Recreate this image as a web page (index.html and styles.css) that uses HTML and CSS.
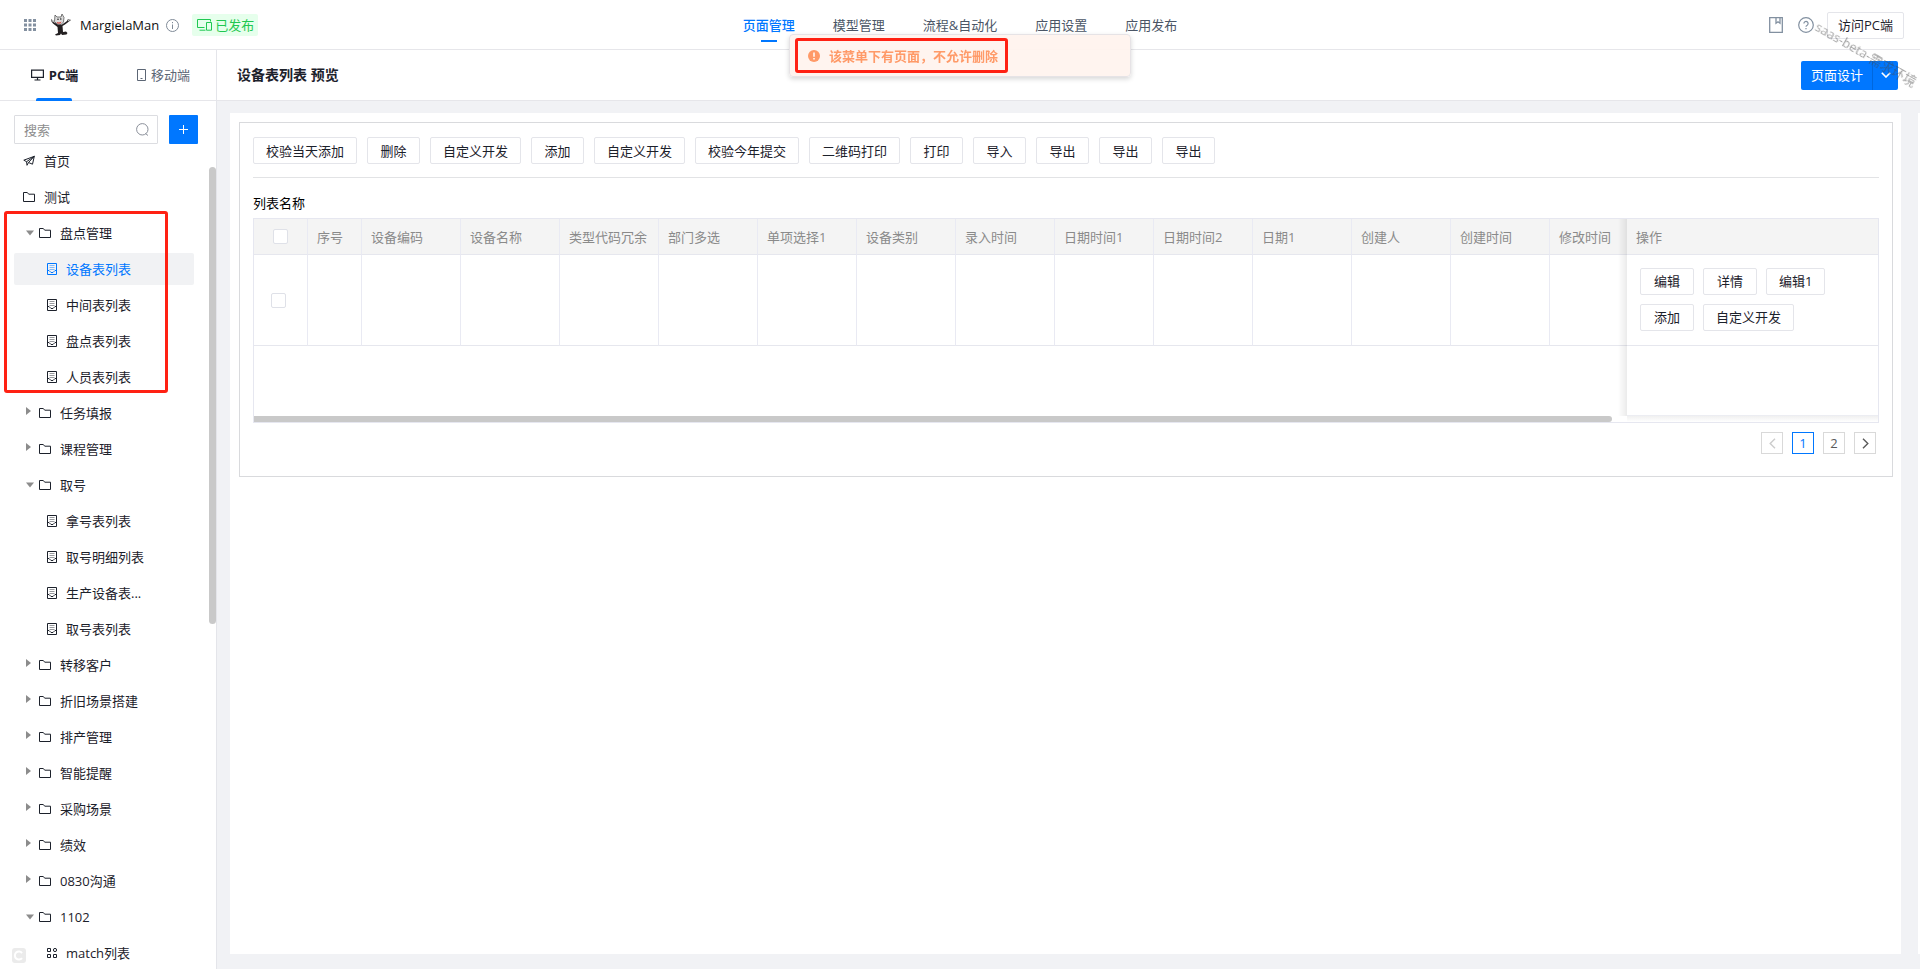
FILE: index.html
```html
<!DOCTYPE html>
<html lang="zh-CN">
<head>
<meta charset="utf-8">
<meta name="viewport" content="width=device-width, initial-scale=1">
<title>设备表列表 预览</title>
<link rel="stylesheet" href="styles.css">
</head>
<body>
<svg class="sprite" aria-hidden="true">
  <symbol id="i-folder" viewBox="0 0 12 12"><path d="M.5 10.5v-9h3.8l1.4 1.700h5.800v7.300z" fill="none" stroke="currentColor"/></symbol>
  <symbol id="i-form" viewBox="0 0 10 12"><path d="M.5.5h9v11h-9z" fill="none" stroke="currentColor"/><path d="M2.500 2.500h5M2.500 4.500h5M2.500 6.500h5" stroke="currentColor" opacity=".45"/><path d="M.5 7.500h1.500L4 9.500h2l2-2h1.500" fill="none" stroke="currentColor"/></symbol>
  <symbol id="i-down" viewBox="0 0 8 8"><path d="M0 1.500h8L4 6.500z" fill="currentColor"/></symbol>
  <symbol id="i-right" viewBox="0 0 8 8"><path d="M0 0v8l5-4z" fill="currentColor"/></symbol>
</svg>

<header class="topbar">
  <div class="brand">
    <button class="icon-btn apps" type="button" aria-label="应用">
      <svg width="12" height="12" viewBox="0 0 12 12" fill="#8390a0"><path d="M0 0h3v3H0zM4.500 0h3v3h-3zM9 0h3v3H9zM0 4.500h3v3H0zM4.500 4.500h3v3h-3zM9 4.500h3v3H9zM0 9h3v3H0zM4.500 9h3v3h-3zM9 9h3v3H9z"/></svg>
    </button>
    <svg class="logo" width="20" height="22" viewBox="0 0 20 22" aria-hidden="true">
      <path d="M0 5l2 1.500.5 1.500L6 10l1 .5h4l3-2 2-1.500 1-2L18 5.500l2 .5-2 1.500-4 3-2.500 1.500.5 6 3-.5 1.500 1.500-1 1.500-4.500.5-1-1.500-1 1.500-4 .500L4 20.500l3-1.500L6.500 13 2 9.500.5 7.500z" fill="#231f20"/>
      <path d="M4 1l2 2h4l1-3 2 3.500-.5 4.500-2.500 2.500-4-.5-2.500-2.500z" fill="#dcdcdc" stroke="#444" stroke-width=".7"/>
      <path d="M5.500 8q3 1 5-.5l-1 2H6.500z" fill="#d8403a"/>
      <circle cx="7" cy="5.300" r=".8" fill="#222"/><circle cx="9.800" cy="5" r=".8" fill="#222"/>
      <path d="M0 5.500l3 1-1 2zM20 5.500l-3 0 0 2z" fill="#bbb"/>
    </svg>
    <span class="brand-name">MargielaMan</span>
    <svg class="info" width="13" height="13" viewBox="0 0 13 13" fill="none" stroke="#7f8a97"><circle cx="6.500" cy="6.500" r="6"/><path d="M6.500 5.500v4.500M6.500 3v1.200"/></svg>
    <span class="badge">
      <svg width="15" height="12" viewBox="0 0 15 12" fill="none" stroke="currentColor"><path d="M7.500 8.500h-7v-8h13v2M2.500 11.200h6M9.500 3.500h5v7.700h-5z"/></svg>
      已发布
    </span>
  </div>
  <nav class="mainnav">
    <a class="active" href="#">页面管理</a>
    <a href="#">模型管理</a>
    <a href="#">流程&amp;自动化</a>
    <a href="#">应用设置</a>
    <a href="#">应用发布</a>
  </nav>
  <div class="tools">
    <button class="icon-btn" type="button" aria-label="文档">
      <svg width="14" height="16" viewBox="0 0 14 16" fill="none" stroke="#8290a0" stroke-width="1.300"><path d="M.7.7h12.600v14.600H.7zM7 .7v5.600l2-1.500 2 1.500V.7"/></svg>
    </button>
    <button class="icon-btn" type="button" aria-label="帮助">
      <svg width="16" height="16" viewBox="0 0 16 16" fill="none" stroke="#8290a0" stroke-width="1.200"><circle cx="8" cy="8" r="7.300"/><path d="M5.900 6.500a2.100 2.100 0 1 1 3.300 1.700Q8 8.900 8 9.800M8 11v1.200"/></svg>
    </button>
    <button class="btn visit" type="button">访问PC端</button>
  </div>
</header>

<div class="body">
  <aside class="sidebar">
    <div class="tabs">
      <button class="tab active" type="button">
        <svg width="13" height="12" viewBox="0 0 13 12" fill="none" stroke="currentColor" stroke-width="1.200"><path d="M.6 1.100h11.800v7.300H.6zM6.500 8.400v2.300M3.500 11h6"/></svg>
        PC端
      </button>
      <button class="tab" type="button">
        <svg width="9" height="12" viewBox="0 0 9 12" fill="none" stroke="currentColor"><path d="M.5.500h8v11h-8zM3.500 9.500h2"/></svg>
        移动端
      </button>
    </div>
    <div class="search-row">
      <label class="search">
        <input type="text" placeholder="搜索" aria-label="搜索">
        <svg width="13" height="13" viewBox="0 0 13 13" fill="none" stroke="#8a8f99"><circle cx="6.300" cy="6.300" r="5.700"/><path d="M9.500 10.500l2.500 2"/></svg>
      </label>
      <button class="add" type="button" aria-label="新增"><svg width="9" height="9" viewBox="0 0 9 9" stroke="#fff"><path d="M4.500 0v9M0 4.500h9"/></svg></button>
    </div>
    <div class="tree-area">
      <ul class="tree">
        <li><a class="row top" href="#"><svg width="12" height="12" viewBox="0 0 12 12" fill="none" stroke="currentColor"><path d="M.8 5.200L11.300 1.300 9.500 9.200 5.500 7.500 4 10.300 3.600 6.700zM3.600 6.700L11.300 1.300 5.500 7.500"/></svg>首页</a></li>
        <li><a class="row top" href="#"><svg width="12" height="12"><use href="#i-folder"/></svg>测试</a></li>
        <li class="group marked">
          <a class="row" href="#"><svg class="caret" width="8" height="8"><use href="#i-down"/></svg><svg width="12" height="12"><use href="#i-folder"/></svg>盘点管理</a>
          <ul>
            <li><a class="row leaf selected" href="#"><svg width="10" height="12"><use href="#i-form"/></svg>设备表列表</a></li>
            <li><a class="row leaf" href="#"><svg width="10" height="12"><use href="#i-form"/></svg>中间表列表</a></li>
            <li><a class="row leaf" href="#"><svg width="10" height="12"><use href="#i-form"/></svg>盘点表列表</a></li>
            <li><a class="row leaf" href="#"><svg width="10" height="12"><use href="#i-form"/></svg>人员表列表</a></li>
          </ul>
        </li>
        <li><a class="row" href="#"><svg class="caret closed" width="8" height="8"><use href="#i-right"/></svg><svg width="12" height="12"><use href="#i-folder"/></svg>任务填报</a></li>
        <li><a class="row" href="#"><svg class="caret closed" width="8" height="8"><use href="#i-right"/></svg><svg width="12" height="12"><use href="#i-folder"/></svg>课程管理</a></li>
        <li>
          <a class="row" href="#"><svg class="caret" width="8" height="8"><use href="#i-down"/></svg><svg width="12" height="12"><use href="#i-folder"/></svg>取号</a>
          <ul>
            <li><a class="row leaf" href="#"><svg width="10" height="12"><use href="#i-form"/></svg>拿号表列表</a></li>
            <li><a class="row leaf" href="#"><svg width="10" height="12"><use href="#i-form"/></svg>取号明细列表</a></li>
            <li><a class="row leaf" href="#"><svg width="10" height="12"><use href="#i-form"/></svg>生产设备表...</a></li>
            <li><a class="row leaf" href="#"><svg width="10" height="12"><use href="#i-form"/></svg>取号表列表</a></li>
          </ul>
        </li>
        <li><a class="row" href="#"><svg class="caret closed" width="8" height="8"><use href="#i-right"/></svg><svg width="12" height="12"><use href="#i-folder"/></svg>转移客户</a></li>
        <li><a class="row" href="#"><svg class="caret closed" width="8" height="8"><use href="#i-right"/></svg><svg width="12" height="12"><use href="#i-folder"/></svg>折旧场景搭建</a></li>
        <li><a class="row" href="#"><svg class="caret closed" width="8" height="8"><use href="#i-right"/></svg><svg width="12" height="12"><use href="#i-folder"/></svg>排产管理</a></li>
        <li><a class="row" href="#"><svg class="caret closed" width="8" height="8"><use href="#i-right"/></svg><svg width="12" height="12"><use href="#i-folder"/></svg>智能提醒</a></li>
        <li><a class="row" href="#"><svg class="caret closed" width="8" height="8"><use href="#i-right"/></svg><svg width="12" height="12"><use href="#i-folder"/></svg>采购场景</a></li>
        <li><a class="row" href="#"><svg class="caret closed" width="8" height="8"><use href="#i-right"/></svg><svg width="12" height="12"><use href="#i-folder"/></svg>绩效</a></li>
        <li><a class="row" href="#"><svg class="caret closed" width="8" height="8"><use href="#i-right"/></svg><svg width="12" height="12"><use href="#i-folder"/></svg>0830沟通</a></li>
        <li>
          <a class="row" href="#"><svg class="caret" width="8" height="8"><use href="#i-down"/></svg><svg width="12" height="12"><use href="#i-folder"/></svg>1102</a>
          <ul>
            <li><a class="row leaf" href="#"><svg width="10" height="12" viewBox="0 0 10 12" fill="none" stroke="currentColor"><path d="M.5 1.500h3v3h-3zM.5 7.500h3v3h-3zM6.500 7.500h3v3h-3z"/><circle cx="8" cy="3" r="1.600"/></svg>match列表</a></li>
          </ul>
        </li>
      </ul>
      <div class="v-track"><div class="v-thumb"></div></div>
    </div>
    <svg class="corner" width="14" height="15" viewBox="0 0 14 15" aria-hidden="true"><rect width="14" height="15" rx="3" fill="#ebebeb"/><path d="M10 5a4 4 0 1 0 0 5" fill="none" stroke="#fff" stroke-width="2"/></svg>
  </aside>

  <main class="main">
    <div class="titlebar">
      <h1>设备表列表 预览</h1>
      <div class="split">
        <button type="button">页面设计</button>
        <button class="more" type="button" aria-label="更多"><svg width="10" height="6" viewBox="0 0 10 6" fill="none" stroke="#fff" stroke-width="1.600"><path d="M.8.8L5 5 9.200.8"/></svg></button>
      </div>
    </div>
    <div class="canvas">
      <div class="page">
        <section class="card">
          <div class="toolbar">
            <button class="btn" type="button">校验当天添加</button>
            <button class="btn" type="button">删除</button>
            <button class="btn" type="button">自定义开发</button>
            <button class="btn" type="button">添加</button>
            <button class="btn" type="button">自定义开发</button>
            <button class="btn" type="button">校验今年提交</button>
            <button class="btn" type="button">二维码打印</button>
            <button class="btn" type="button">打印</button>
            <button class="btn" type="button">导入</button>
            <button class="btn" type="button">导出</button>
            <button class="btn" type="button">导出</button>
            <button class="btn" type="button">导出</button>
          </div>
          <h2>列表名称</h2>
          <div class="frame">
            <div class="scroller">
              <table>
                <colgroup><col class="c-s"><col class="c-s"><col class="c-m" span="12"><col class="c-l"><col class="c-op"></colgroup>
                <thead>
                  <tr>
                    <th class="pick"><input type="checkbox" aria-label="全选"></th>
                    <th>序号</th><th>设备编码</th><th>设备名称</th><th>类型代码冗余</th><th>部门多选</th><th>单项选择1</th><th>设备类别</th><th>录入时间</th><th>日期时间1</th><th>日期时间2</th><th>日期1</th><th>创建人</th><th>创建时间</th><th>修改时间</th>
                    <th class="fixed">操作</th>
                  </tr>
                </thead>
                <tbody>
                  <tr class="data">
                    <td class="pick"><input type="checkbox" aria-label="选择"></td>
                    <td></td><td></td><td></td><td></td><td></td><td></td><td></td><td></td><td></td><td></td><td></td><td></td><td></td><td></td>
                    <td class="fixed">
                      <div class="ops">
                        <button class="btn" type="button">编辑</button>
                        <button class="btn" type="button">详情</button>
                        <button class="btn" type="button">编辑1</button>
                        <button class="btn" type="button">添加</button>
                        <button class="btn" type="button">自定义开发</button>
                      </div>
                    </td>
                  </tr>
                  <tr class="rest"><td colspan="15"></td><td class="fixed"></td></tr>
                </tbody>
              </table>
            </div>
            <div class="h-track"><div class="h-thumb"></div></div>
          </div>
          <div class="pager">
            <button type="button" disabled aria-label="上一页"><svg width="7" height="11" viewBox="0 0 7 11" fill="none" stroke="currentColor" stroke-width="1.400"><path d="M6 .8L1.200 5.500 6 10.200"/></svg></button>
            <button class="current" type="button">1</button>
            <button type="button">2</button>
            <button type="button" aria-label="下一页"><svg width="7" height="11" viewBox="0 0 7 11" fill="none" stroke="currentColor" stroke-width="1.400"><path d="M1 .8l4.800 4.700L1 10.200"/></svg></button>
          </div>
        </section>
      </div>
      <div class="edge"></div>
    </div>
  </main>
</div>

<div class="toast" role="alert">
  <div class="toast-mark">
    <svg width="12" height="12" viewBox="0 0 12 12"><circle cx="6" cy="6" r="6" fill="#ff9a68"/><path d="M6 2.500v4.300M6 8v1.500" stroke="#fff" stroke-width="1.500"/></svg>
    该菜单下有页面，不允许删除
  </div>
</div>
<div class="watermark">saas-beta-需求环境</div>
</body>
</html>
```

FILE: styles.css
```css
* { box-sizing: border-box; }

body {
  margin: 0;
  height: 100vh;
  display: flex;
  flex-direction: column;
  overflow: hidden;
  font: 13px/20px "Open Sans", "Noto Sans CJK SC", sans-serif;
  color: #1c212b;
  background: #fff;
}

button, input { font: inherit; color: inherit; margin: 0; }
button { padding: 0; border: 0; background: none; }
a { color: inherit; text-decoration: none; }
ul { list-style: none; margin: 0; padding: 0; }
svg { flex: none; display: block; }
.sprite { position: absolute; width: 0; height: 0; }

.topbar {
  display: grid;
  grid-template-columns: 1fr auto 1fr;
  height: 50px;
  flex: none;
  border-bottom: 1px solid #e6e6ea;
}
.brand { display: flex; align-items: center; padding-left: 24px; }
.logo { margin-left: 15px; }
.brand-name { margin-left: 9px; color: #111; }
.info { margin-left: 7px; }
.badge {
  display: flex;
  align-items: center;
  gap: 3px;
  height: 22px;
  margin-left: 13px;
  padding: 0 4px 0 5px;
  border-radius: 2px;
  background: #e6ffec;
  color: #1fc851;
}
.mainnav { display: flex; gap: 38px; color: #4b5666; }
.mainnav a { position: relative; line-height: 50px; }
.mainnav .active { color: #0077ff; font-weight: 500; }
.mainnav .active::after {
  content: "";
  position: absolute;
  left: 50%;
  top: 40px;
  width: 16px;
  height: 2px;
  margin-left: -8px;
  background: #0077ff;
}
.tools { display: flex; align-items: center; justify-content: flex-end; gap: 15px; padding-right: 16px; }

.btn {
  height: 27px;
  min-width: 53px;
  padding: 0 12px;
  border: 1px solid #e4e5ea;
  border-radius: 2px;
  background: #fff;
  white-space: nowrap;
}
.visit { padding: 0 10px; margin-left: -2px; }

.body { flex: 1; display: flex; min-height: 0; }

.sidebar {
  position: relative;
  width: 217px;
  flex: none;
  display: flex;
  flex-direction: column;
  border-right: 1px solid #e4e5ea;
}
.tabs { display: flex; height: 51px; flex: none; border-bottom: 1px solid #e6e6ea; }
.tab {
  position: relative;
  display: flex;
  align-items: center;
  justify-content: center;
  gap: 5px;
  flex: 1;
  color: #5c6675;
}
.tab.active { padding-left: 2px; font-weight: 700; color: #1c212b; }
.tab + .tab { padding-left: 4px; }
.tab.active::after {
  content: "";
  position: absolute;
  left: 36px;
  bottom: -1px;
  width: 36px;
  height: 3px;
  border-radius: 2px 2px 0 0;
  background: #0077ff;
}
.search-row { display: flex; gap: 11px; padding: 14px 18px 0 14px; flex: none; }
.search {
  display: flex;
  align-items: center;
  flex: 1;
  min-width: 0;
  height: 29px;
  padding: 0 8px 0 9px;
  border: 1px solid #dcdde1;
  border-radius: 1px;
}
.search input { flex: 1; min-width: 0; padding: 0; border: 0; outline: 0; background: none; }
.search input::placeholder { color: #8d8d8d; }
.add { display: grid; place-items: center; width: 29px; height: 29px; border-radius: 1px; background: #0077ff; }

.tree-area { flex: 1; min-height: 0; display: flex; overflow: hidden; }
.tree { flex: 1; padding-left: 14px; }
.row {
  display: flex;
  align-items: center;
  height: 32px;
  margin: 0 15px 4px 0;
  padding-left: 12px;
  gap: 9px;
  border-radius: 2px;
  white-space: nowrap;
}
.tree > li:first-child { padding-top: 1px; }
.row.top { padding-left: 9px; }
.row.leaf { padding-left: 33px; }
.caret { margin-right: -4px; color: #8c8c8c; }
.caret.closed { margin-bottom: 4px; }
.row.selected { background: #f1f2f4; color: #0077ff; }
.marked { position: relative; }
.marked::after {
  content: "";
  position: absolute;
  left: -10px;
  right: 41px;
  top: -6px;
  bottom: 0;
  border: 3px solid #ff2113;
  border-radius: 3px;
  pointer-events: none;
}
.v-track { width: 7px; flex: none; padding-top: 23px; }
.v-thumb { height: 57%; border-radius: 4px; background: #c9c9c9; }
.corner { position: absolute; left: 12px; bottom: 6px; }

.main { flex: 1; min-width: 0; display: flex; flex-direction: column; }
.titlebar {
  display: flex;
  align-items: center;
  justify-content: space-between;
  height: 51px;
  flex: none;
  padding: 0 22px 0 20px;
  border-bottom: 1px solid #e6e6ea;
}
h1 { margin: 0; font-size: 14px; font-weight: 700; }
.split { display: flex; height: 29px; border-radius: 2px; overflow: hidden; background: #0077ff; color: #fff; }
.split button { padding: 0 9px 0 10px; }
.split .more { display: grid; place-items: center; width: 26px; padding: 0; border-left: 1px solid #0067dd; }

.canvas { flex: 1; min-height: 0; display: flex; gap: 17px; padding: 12px 0 15px 13px; background: #f1f2f5; }
.page { flex: 1; min-width: 0; padding: 9px 8px 9px 9px; background: #fff; }
.edge { width: 2px; background: #fff; }
.card { padding: 14px 13px 22px; border: 1px solid #d9dadd; }
.toolbar { display: flex; gap: 10px; padding-bottom: 13px; border-bottom: 1px solid #e2e3e5; }
h2 { margin: 15px 0 5px; font-size: 13px; font-weight: 400; color: #000; }

.frame { border: 1px solid #e6e7f0; }
.scroller { overflow: hidden; }
table { width: 1945px; min-width: 100%; table-layout: fixed; border-collapse: separate; border-spacing: 0; }
.c-s { width: 54px; }
.c-m { width: 99px; }
.c-l { width: 398px; }
.c-op { width: 251px; }
th, td { padding: 0 9px; border-right: 1px solid #e9eaf3; border-bottom: 1px solid #e6e7ee; text-align: left; font-weight: 400; }
th { height: 36px; background: #f4f4f4; color: #8a8a8a; white-space: nowrap; }
.data td { height: 91px; }
.rest td { height: 70px; border-right: 0; border-bottom: 0; }
th.fixed, td.fixed { position: sticky; right: 0; border-right: 0; }
td.fixed { background: #fff; }
.rest td.fixed { border-bottom: 1px solid #ecedf2; }
.fixed::before {
  content: "";
  position: absolute;
  left: -9px;
  top: 0;
  bottom: -1px;
  width: 9px;
  background: linear-gradient(to left, rgba(0, 0, 0, .08), rgba(0, 0, 0, 0));
}
.pick { text-align: center; padding: 0; }
td.pick { padding-right: 4px; }
input[type="checkbox"] {
  appearance: none;
  display: block;
  width: 15px;
  height: 15px;
  margin: 0 auto;
  border: 1px solid #dfe1e8;
  border-radius: 2px;
  background: #fff;
}
.ops { display: flex; flex-wrap: wrap; gap: 9px; padding: 0 4px 2px; }
.ops .btn { min-width: 54px; }
.h-track {
  height: 6px;
  background: linear-gradient(rgba(0, 0, 0, .06), rgba(0, 0, 0, 0)) right / 251px 100% no-repeat;
}
.h-thumb { width: 1358px; max-width: 84%; height: 6px; border-radius: 0 3px 3px 0; background: #c9c9c9; }

.pager { display: flex; justify-content: flex-end; gap: 9px; margin: 9px 3px 0 0; color: #5a5a5a; }
.pager button { display: grid; place-items: center; width: 22px; height: 22px; border: 1px solid #d9d9d9; }
.pager button:disabled { color: #ccc; }
.pager .current { border-color: #0077ff; color: #0077ff; }

.toast {
  position: fixed;
  top: 34px;
  left: 50%;
  width: 342px;
  margin-left: -171px;
  padding: 3px 5px;
  border: 1px solid #e6e3e6;
  border-radius: 4px;
  background: rgba(255, 243, 238, .95);
  box-shadow: 0 2px 5px rgba(0, 0, 0, .16);
}
.toast-mark {
  display: flex;
  align-items: center;
  gap: 9px;
  width: 213px;
  height: 35px;
  padding-left: 10px;
  border: 3px solid #ff2113;
  border-radius: 3px;
  font-weight: 700;
  color: #ff9a68;
  white-space: nowrap;
}
.watermark {
  position: fixed;
  right: -3px;
  top: 44px;
  transform: rotate(30deg);
  color: rgba(70, 70, 70, .5);
  pointer-events: none;
  white-space: nowrap;
}
```
